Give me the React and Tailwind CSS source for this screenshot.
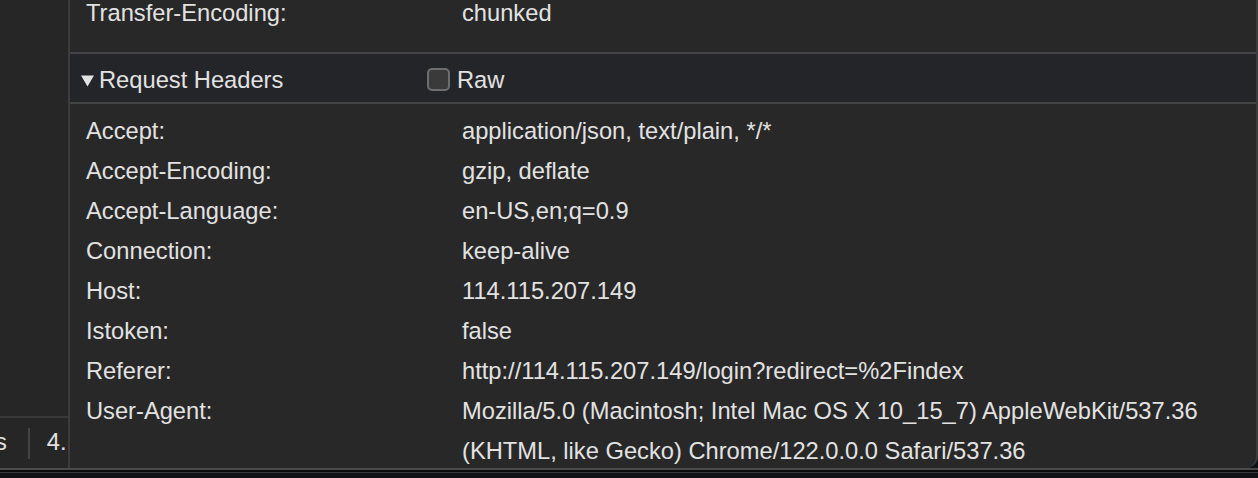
const headers = [
  ['Accept:', 'application/json, text/plain, */*'],
  ['Accept-Encoding:', 'gzip, deflate'],
  ['Accept-Language:', 'en-US,en;q=0.9'],
  ['Connection:', 'keep-alive'],
  ['Host:', '114.115.207.149'],
  ['Istoken:', 'false'],
  ['Referer:', 'http://114.115.207.149/login?redirect=%2Findex'],
];

const Row = ({ name, children }) => (
  <div className="flex leading-[40px]">
    <div className="w-[392px] shrink-0 pl-[16px]">{name}</div>
    <div className="flex flex-col">{children}</div>
  </div>
);

export default function App() {
  return (
    <div
      className="w-[1258px] h-[478px] overflow-hidden bg-[#111216] text-[#e2e2e2] text-[23.7px] flex flex-col"
      style={{ fontFamily: '"Liberation Sans", Arial, sans-serif' }}
    >
      <div className="flex h-[470px] shrink-0 border-b-2 border-[#4a4a4a]">
        {/* left sidebar */}
        <div className="w-[68px] shrink-0 bg-[#262626] flex flex-col justify-end">
          <div className="h-[52px] border-t-2 border-[#383838] flex items-center overflow-hidden">
            <span className="-ml-[5px] pr-[21px]">s</span>
            <span className="w-[2px] h-[31px] bg-[#444]" />
            <span className="pl-[17px]">4.</span>
          </div>
        </div>

        {/* main panel */}
        <div className="flex-1 bg-[#282828] border-l-2 border-r-2 border-[#3c3c3c] rounded-br-[12px] flex flex-col overflow-hidden">
          <div className="h-[52px] shrink-0 pl-[16px] leading-[26px]">
            <div className="flex">
              <div className="w-[376px] shrink-0">Transfer-Encoding:</div>
              <div>chunked</div>
            </div>
          </div>

          <div className="h-[52px] shrink-0 border-y-2 border-[#444] bg-[#242529] flex items-center pt-[6px]">
            <div className="w-[357px] shrink-0 pl-[11px] flex items-center">
              <svg width="13" height="12" viewBox="0 0 13 12" className="mr-[5px]">
                <path d="M0 0.5 H13 L6.5 11.5 Z" fill="#e2e2e2" />
              </svg>
              <span>Request Headers</span>
            </div>
            <span className="w-[23px] h-[23px] rounded-[5px] border-2 border-[#6e6e6e] bg-[#3a3a3a] mr-[7px] -mt-[3px]" />
            <span>Raw</span>
          </div>

          <div className="pt-[7px]">
            {headers.map(([k, v]) => (
              <Row key={k} name={k}>
                <span>{v}</span>
              </Row>
            ))}
            <Row name="User-Agent:">
              <span>Mozilla/5.0 (Macintosh; Intel Mac OS X 10_15_7) AppleWebKit/537.36</span>
              <span>(KHTML, like Gecko) Chrome/122.0.0.0 Safari/537.36</span>
            </Row>
          </div>
        </div>
      </div>
      <div className="h-[2px] bg-[#0a0a0a]" />
      <div className="h-[1px] bg-[#3a3a3a]" />
    </div>
  );
}
